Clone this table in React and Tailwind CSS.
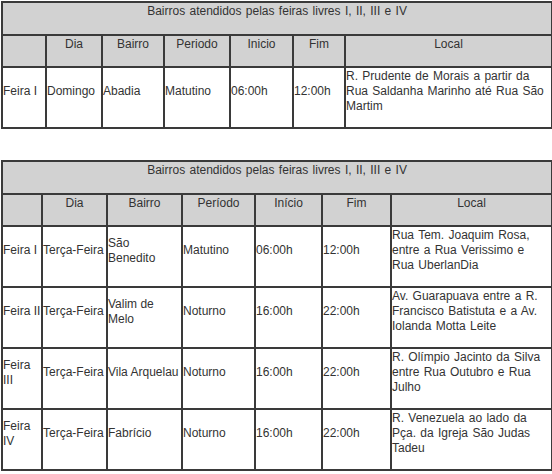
const feiraTitle = 'Bairros atendidos pelas feiras livres I, II, III e IV'

const firstTable = {
  cols: [44, 56, 62, 66, 63, 52, 207],
  heads: ['', 'Dia', 'Bairro', 'Periodo', 'Inicio', 'Fim', 'Local'],
  rows: [
    ['Feira I', 'Domingo', 'Abadia', 'Matutino', '06:00h', '12:00h', 'R. Prudente de Morais a partir da Rua Saldanha Marinho até Rua São Martim'],
  ],
}

const secondTable = {
  cols: [40, 65, 75, 73, 67, 69, 161],
  heads: ['', 'Dia', 'Bairro', 'Período', 'Início', 'Fim', 'Local'],
  rows: [
    ['Feira I', 'Terça-Feira', 'São Benedito', 'Matutino', '06:00h', '12:00h', 'Rua Tem. Joaquim Rosa, entre a Rua Verissimo e Rua\u00a0UberlanDia'],
    ['Feira II', 'Terça-Feira', 'Valim de Melo', 'Noturno', '16:00h', '22:00h', 'Av. Guarapuava entre a R. Francisco Batistuta e a Av. Iolanda Motta Leite'],
    ['Feira III', 'Terça-Feira', 'Vila Arquelau', 'Noturno', '16:00h', '22:00h', 'R. Olímpio Jacinto da Silva entre Rua Outubro e Rua Julho'],
    ['Feira IV', 'Terça-Feira', 'Fabrício', 'Noturno', '16:00h', '22:00h', 'R. Venezuela ao lado da Pça. da Igreja São Judas Tadeu'],
  ],
}

const cell = 'border-2 border-[#3a3a3a] pt-px pl-0 align-middle'

const FeiraTable = ({ data }) => (
  <table className="w-[550px] table-fixed border-collapse">
    <colgroup>
      {data.cols.map((w, i) => (
        <col key={i} style={{ width: w }} />
      ))}
    </colgroup>
    <thead>
      <tr className="bg-[#d2d2d2]">
        <td colSpan={7} className={`${cell} pr-0 pb-[15px] text-center [word-spacing:1px]`}>{feiraTitle}</td>
      </tr>
      <tr className="bg-[#d2d2d2]">
        {data.heads.map((h, i) => (
          <td key={i} className={`${cell} pr-0 pb-[14px] text-center`}>{h}</td>
        ))}
      </tr>
    </thead>
    <tbody>
      {data.rows.map((row, r) => (
        <tr key={r} className="bg-white">
          {row.map((c, i) => (
            <td
              key={i}
              className={`${cell} pb-[13px] text-left ${i === 2 ? 'pr-[1.5px]' : 'pr-0'} ${i === 6 ? '[word-spacing:1px]' : ''}`}
            >
              {c}
            </td>
          ))}
        </tr>
      ))}
    </tbody>
  </table>
)

export default function App() {
  return (
    <div className="w-[552px] h-[474px] overflow-hidden bg-white pt-px pl-px text-[12px] leading-[15px] text-[#333] font-['Liberation_Sans',Arial,sans-serif]">
      <FeiraTable data={firstTable} />
      <div className="h-[31px]" />
      <FeiraTable data={secondTable} />
    </div>
  )
}
